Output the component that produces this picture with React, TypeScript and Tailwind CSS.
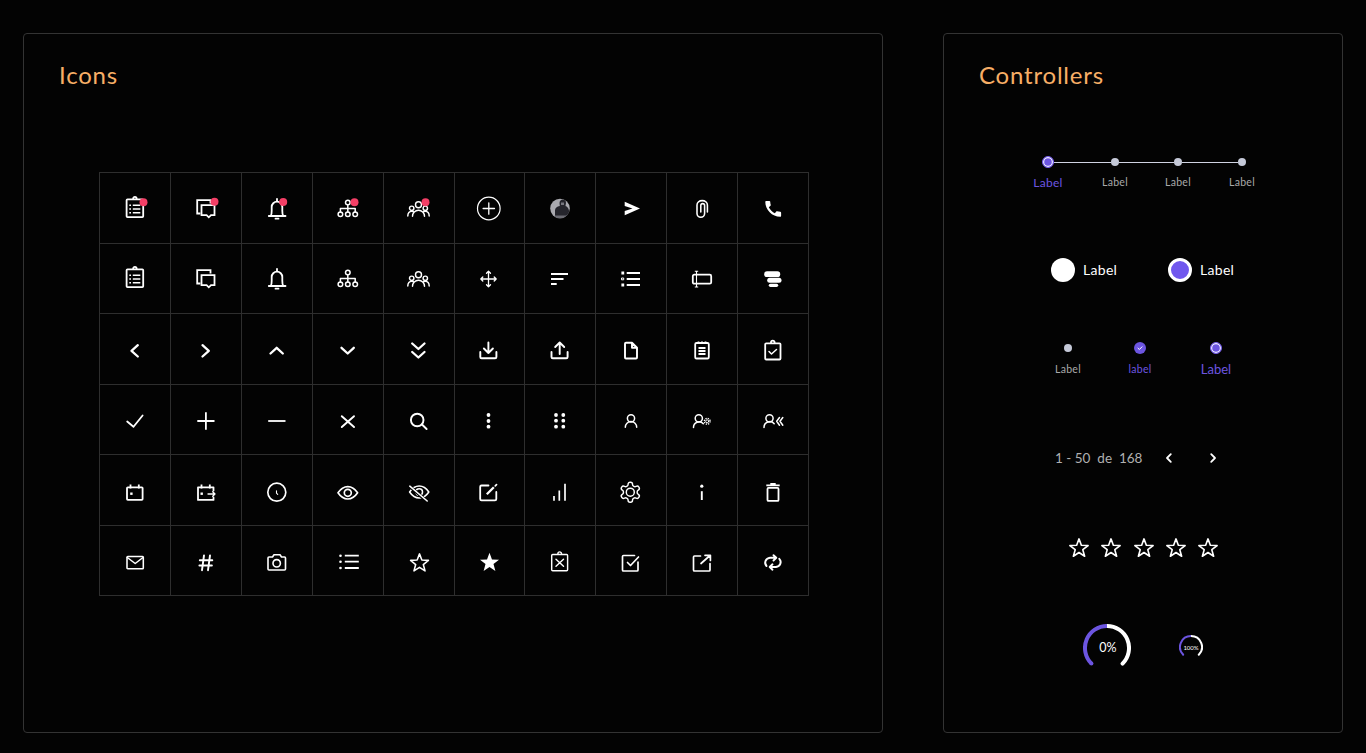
import React from "react";

const starPts = (cx: number, cy: number, R: number, r: number) => {
  const p: string[] = [];
  for (let i = 0; i < 10; i++) {
    const a = (Math.PI / 5) * i - Math.PI / 2;
    const q = i % 2 === 0 ? R : r;
    p.push(`${(cx + q * Math.cos(a)).toFixed(2)},${(cy + q * Math.sin(a)).toFixed(2)}`);
  }
  return p.join(" ");
};

const I = ({ children, w = 1.5 }: { children: React.ReactNode; w?: number }) => (
  <svg
    viewBox="0 0 24 24"
    fill="none"
    stroke="#fff"
    strokeWidth={w * 1.2}
    strokeLinecap="round"
    strokeLinejoin="round"
    className="w-6 h-6 overflow-visible"
  >
    {children}
  </svg>
);

const Dot = ({ x, y }: { x: number; y: number }) => <circle cx={x} cy={y} r={4} fill="#f43f66" stroke="none" />;

const Clipboard = () => (
  <>
    <rect x={3.6} y={3.4} width={16.6} height={17.8} rx={0.9} />
    <path d="M10.200 3.200v-.6a1.700 1.700 0 0 1 3.400 0v.6" />
    <path strokeWidth={1.4} strokeLinecap="butt" d="M9.800 9.200H17.300M9.800 13H17.300M9.800 16.800H17.300M6.300 9.200H8M6.300 13H8M6.300 16.800H8" />
  </>
);
const Messages = () => (
  <>
    <path strokeLinecap="square" strokeLinejoin="miter" d="M5.500 17.500H3.200V4.200H16.500V6.500" />
    <path strokeLinecap="square" strokeLinejoin="miter" d="M7.500 9.200H20.500V19.200H17L14.800 21.300L12.600 19.200H7.500Z" />
  </>
);
const Bell = () => (
  <>
    <path d="M5.800 19.800c.9-1.300 .9-3 .9-5V11a5.300 5.300 0 0 1 10.600 0v3.800c0 2 0 3.700 .9 5" />
    <path d="M3.800 20H20.500M10.500 22.700H13.500M12 2.800V5" />
  </>
);
const Org = () => (
  <g strokeWidth={1.5}>
    <circle cx={11.8} cy={6.500} r={2.300} />
    <circle cx={4.400} cy={18.200} r={2.300} />
    <circle cx={11.800} cy={18.200} r={2.300} />
    <circle cx={19.200} cy={18.200} r={2.300} />
    <path d="M11.800 8.800V15.900M4.400 15.900V12.500H19.200V15.900" />
  </g>
);
const Group = () => (
  <g strokeWidth={1.45}>
    <circle cx={11.500} cy={8.700} r={3} />
    <circle cx={4.700} cy={12.300} r={2.200} />
    <circle cx={18.300} cy={12.300} r={2.200} />
    <path d="M5.500 20.300a6 6 0 0 1 12 0M.8 20c0-3 1.500-4.800 3.900-4.800 .8 0 1.500 .2 2.100 .6M22.200 20c0-3-1.500-4.800-3.900-4.800-.8 0-1.500 .2-2.100 .6" />
  </g>
);
const Chk = ({ d }: { d: string }) => <path strokeWidth={2.3} d={d} />;
const Tray = ({ x }: { x: number }) => (
  <path d={`M${x} 15v5a1.300 1.300 0 0 0 1.300 1.300H${x + 14.800}a1.300 1.300 0 0 0 1.300-1.300v-5`} />
);

const cells: React.ReactNode[] = [
  <I><Clipboard /><Dot x={20.5} y={6.2} /></I>,
  <I><Messages /><Dot x={20.5} y={5.8} /></I>,
  <I><Bell /><Dot x={18.2} y={5.9} /></I>,
  <I><Org /><Dot x={18.5} y={6.2} /></I>,
  <I><Group /><Dot x={18.5} y={6.2} /></I>,
  <I w={1}>
    <circle cx={11.8} cy={12.5} r={11.3} />
    <path strokeWidth={1.3} d="M11.800 6.800V18.200M6.100 12.500H17.500" />
  </I>,
  <I>
    <defs>
      <clipPath id="av"><circle cx={12} cy={12.5} r={9.8} /></clipPath>
    </defs>
    <g clipPath="url(#av)" stroke="none">
      <rect x={0} y={0} width={24} height={24} fill="#a9a9af" />
      <path fill="#25252c" d="M7 23V14.500c0-2.500 2-4 4.800-4.500L11.500 7c0-2 1.500-3.500 3.500-3.500s3 1.500 3 3.500l-.5 3c1.500 .5 3 2 3.500 4.500V23Z" />
      <path fill="#77777f" d="M13 6.500h3V9h-3Z" />
      <path fill="#8a8a92" d="M3 19.500h18v5H3Z" opacity={0.7} />
    </g>
  </I>,
  <I><path stroke="none" fill="#fff" d="M5.700 5.800L21 12.500L5.700 19.200V15L13.500 12.500L5.700 10Z" /></I>,
  <I w={1.3}><path d="M17.400 16V9a5.200 4.400 0 0 0-10.400 0v8.500a3.800 3.800 0 0 0 7.600 0V9.500a1.900 1.900 0 0 0-3.800 0V16" /></I>,
  <I>
    <g transform="translate(12.2 12.8) scale(.88) translate(-12 -12)">
      <path stroke="none" fill="#fff" d="M20.010 15.380c-1.230 0-2.420-.2-3.530-.56-.35-.12-.74-.03-1.010.24l-1.570 1.970c-2.830-1.350-5.480-3.900-6.890-6.830l1.950-1.660c.27-.28.35-.67.24-1.020-.37-1.110-.56-2.300-.56-3.530 0-.54-.45-.99-.99-.99H4.190C3.650 3 3 3.240 3 3.990 3 13.280 10.730 21 20.010 21c.71 0 .99-.63.99-1.180v-3.450c0-.54-.45-.99-.99-.99z" />
    </g>
  </I>,

  <I><Clipboard /></I>,
  <I><Messages /></I>,
  <I><Bell /></I>,
  <I><Org /></I>,
  <I><Group /></I>,
  <I w={1.1}>
    <path d="M3.800 13H19.200M11.500 5.200V20.800M9.500 7.200L11.500 5.200L13.500 7.200M9.500 18.800L11.500 20.800L13.500 18.800M5.800 11L3.800 13L5.800 15M17.200 11L19.200 13L17.200 15" />
  </I>,
  <I w={1.5}><path strokeLinecap="butt" d="M3 8H20M3 13H15.500M3 18H8.700" /></I>,
  <I>
    <path strokeLinecap="butt" d="M7.700 7H21M7.700 13H21M7.700 19H21" />
    <path strokeWidth={3} strokeLinecap="butt" d="M2.400 7H5.200M2.400 19H5.200" />
    <rect x={2.900} y={12} width={1.800} height={1.800} strokeWidth={1} />
  </I>,
  <I>
    <rect x={2.800} y={8.700} width={18.400} height={9} rx={1.500} />
    <path strokeWidth={1.1} strokeLinecap="butt" d="M6.500 5.300V21M4.800 5.300H8.200M4.800 21H8.200" />
  </I>,
  <I>
    <g stroke="none" fill="#fff">
      <rect x={3.200} y={5.300} width={16} height={5.700} rx={2.850} />
      <rect x={6.200} y={11.700} width={14.300} height={5} rx={2.500} />
      <rect x={7.800} y={17.700} width={9.400} height={3.300} rx={1.650} />
    </g>
  </I>,

  <I><Chk d="M14.800 8.200L8.500 13.900L14.800 19.500" /></I>,
  <I><Chk d="M8.500 8.200L14.800 13.900L8.500 19.500" /></I>,
  <I><Chk d="M5.500 16.500L11.700 10.800L17.800 16.500" /></I>,
  <I><Chk d="M5.500 10.800L11.700 16.500L17.800 10.800" /></I>,
  <I><Chk d="M5.200 6.500L11.400 12L17.500 6.500M5.200 15L11.400 20.500L17.500 15" /></I>,
  <I w={1.6}><Tray x={3.300} /><path d="M11.400 5.500V16M6.900 11.500L11.400 16L15.900 11.500" /></I>,
  <I w={1.6}><Tray x={3.500} /><path d="M11.700 17V5.500M7.200 10L11.700 5.500L16.200 10" /></I>,
  <I w={1.6}><path d="M7 5.800H13L18 10.800V20.500a1 1 0 0 1-1 1H7a1 1 0 0 1-1-1V6.800a1 1 0 0 1 1-1ZM13 5.800V10.800H18" /></I>,
  <I>
    <rect x={5.200} y={6} width={13.600} height={15.500} rx={1.300} />
    <path strokeLinecap="butt" d="M8.500 4.400V7M12 4.400V7M15.500 4.400V7M8.500 11H15.500M8.500 14H15.500M8.500 17H15.500" />
  </I>,
  <I>
    <rect x={4.200} y={6.300} width={15.300} height={16.200} rx={1} />
    <path d="M10 6.100v-.6a1.800 1.800 0 0 1 3.600 0v.6" />
    <path strokeWidth={1.5} d="M8 14.500L10.500 17L15.500 12.500" />
  </I>,

  <I w={1.5}><path d="M4.200 14.500L10.500 19.800L19.600 8.500" /></I>,
  <I w={1.5}><path strokeLinecap="butt" d="M3.300 14H20.500M11.900 5.300V22.700" /></I>,
  <I w={1.5}><path strokeLinecap="butt" d="M3.200 14H20.500" /></I>,
  <I w={1.6}><path d="M5.800 9.200L18 20M18 9.200L5.800 20" /></I>,
  <I w={1.6}><circle cx={10.200} cy={13} r={6.300} /><path d="M15 17.500L19.600 22" /></I>,
  <I><g stroke="none" fill="#fff"><circle cx={11.500} cy={8} r={1.900} /><circle cx={11.500} cy={14} r={1.900} /><circle cx={11.500} cy={19.700} r={1.900} /></g></I>,
  <I>
    <g stroke="none" fill="#fff">
      <circle cx={8} cy={8} r={1.900} /><circle cx={15.300} cy={8} r={1.900} />
      <circle cx={8} cy={13.700} r={1.900} /><circle cx={15.300} cy={13.700} r={1.900} />
      <circle cx={8} cy={19.700} r={1.900} /><circle cx={15.300} cy={19.700} r={1.900} />
    </g>
  </I>,
  <I w={1.25}><circle cx={12} cy={11.300} r={3.600} /><path d="M6.300 20.300a5.700 5.700 0 0 1 11.400 0" /></I>,
  <I w={1.25}>
    <circle cx={8.800} cy={11.300} r={3.600} />
    <path d="M3.500 20.500a5.600 5.600 0 0 1 9.800-3.800" />
    <circle cx={17.200} cy={14.300} r={1.500} strokeWidth={1} />
    <circle cx={17.200} cy={14.300} r={2.900} strokeWidth={1.300} strokeDasharray="1.300 1.000" strokeLinecap="butt" />
  </I>,
  <I w={1.25}>
    <circle cx={8.500} cy={11.300} r={3.600} />
    <path d="M3 20.500a5.800 5.800 0 0 1 10.200-3.800M18.500 10.500L15.700 14.300L18.500 18.200M21.800 10.500L19 14.300L21.800 18.200" />
  </I>,

  <I>
    <rect x={4} y={9.300} width={15.600} height={12.600} rx={.8} />
    <path strokeLinecap="butt" d="M7.500 6.500V10.500M15.800 6.500V10.500" />
    <rect x={7.200} y={14.500} width={2.400} height={2.400} fill="#fff" stroke="none" />
  </I>,
  <I>
    <path d="M19.500 12.500V9.300H4V21.900H19.500V19.500" />
    <path strokeLinecap="butt" d="M7.500 6.500V10.500M15.800 6.500V10.500" />
    <rect x={6.500} y={14.500} width={2.400} height={2.400} fill="#fff" stroke="none" />
    <path strokeWidth={1.300} d="M14 16H21M18.700 13.700L21 16L18.700 18.300" />
  </I>,
  <I w={1.4}>
    <circle cx={11.800} cy={14.200} r={9} />
    <path strokeWidth={1.100} d="M11.500 12.800V15.200L12.700 16.300" />
  </I>,
  <I w={1.4}>
    <path d="M2 14.800C5 10.300 8 8.600 11.800 8.600S18.600 10.300 21.600 14.800C18.600 19.300 15.600 21 11.800 21S5 19.300 2 14.800Z" />
    <circle cx={11.800} cy={14.800} r={3.500} />
  </I>,
  <I w={1.3}>
    <path d="M2.600 14C5.500 9.700 8.500 8 12.200 8S19 9.700 21.800 14C19 18.300 16 20 12.200 20S5.500 18.300 2.600 14Z" />
    <circle cx={12.200} cy={14} r={3.300} />
    <path stroke="#030303" strokeWidth={3} d="M4 9.500L19.500 23" />
    <path d="M2.800 8.200L20.200 23" />
  </I>,
  <I w={1.5}>
    <path d="M11.500 7.500H4.500a1.300 1.300 0 0 0-1.300 1.300V21a1.300 1.300 0 0 0 1.300 1.300H18a1.300 1.300 0 0 0 1.300-1.300V14" />
    <path strokeWidth={2.300} strokeLinecap="butt" d="M9.800 16.300L16.800 9.200" />
    <path d="M18.300 7.800L19.500 6.700" />
  </I>,
  <I w={1.4}><path strokeLinecap="butt" d="M6 18V22.800M11.300 12.500V22.800M17 5.800V22.800" /></I>,
  <I w={1.2}>
    <g transform="translate(-.7 2.200)">
      <path d="M12.220 2h-.44a2 2 0 0 0-2 2v.18a2 2 0 0 1-1 1.730l-.43.25a2 2 0 0 1-2 0l-.15-.08a2 2 0 0 0-2.730.73l-.22.38a2 2 0 0 0 .73 2.730l.15.1a2 2 0 0 1 1 1.720v.51a2 2 0 0 1-1 1.740l-.15.09a2 2 0 0 0-.73 2.730l.22.38a2 2 0 0 0 2.730.73l.15-.08a2 2 0 0 1 2 0l.43.25a2 2 0 0 1 1 1.730V20a2 2 0 0 0 2 2h.44a2 2 0 0 0 2-2v-.18a2 2 0 0 1 1-1.730l.43-.25a2 2 0 0 1 2 0l.15.08a2 2 0 0 0 2.730-.73l.22-.39a2 2 0 0 0-.73-2.730l-.15-.08a2 2 0 0 1-1-1.740v-.5a2 2 0 0 1 1-1.740l.15-.09a2 2 0 0 0 .73-2.730l-.22-.38a2 2 0 0 0-2.730-.73l-.15.08a2 2 0 0 1-2 0l-.43-.25a2 2 0 0 1-1-1.730V4a2 2 0 0 0-2-2z" />
      <circle cx={12} cy={12} r={4} />
    </g>
  </I>,
  <I w={1.6}>
    <circle cx={11.800} cy={8.200} r={1.600} fill="#fff" stroke="none" />
    <path strokeLinecap="butt" d="M11.800 13.200V22" />
  </I>,
  <I w={1.5}>
    <path strokeLinecap="butt" d="M5.300 7.300H18.700M9.300 6H14.700" />
    <rect x={6.500} y={9.900} width={11} height={13} rx={1} />
  </I>,

  <I w={1.3}>
    <rect x={4} y={8.500} width={16.300} height={12.300} rx={.8} />
    <path d="M4.300 9.500L12.200 15.500L20 9.500" />
  </I>,
  <I w={1.6}><path d="M10 7.500L8 22.200M16 7.500L14 22.200M5.800 12.200H18.300M5.400 17.500H17.900" /></I>,
  <I w={1.35}>
    <path d="M3 10a1 1 0 0 1 1-1H7.500L9 6.800H15L16.500 9H19.500a1 1 0 0 1 1 1V21a1 1 0 0 1-1 1H4a1 1 0 0 1-1-1Z" />
    <circle cx={11.700} cy={15.300} r={3.700} />
  </I>,
  <I>
    <path strokeLinecap="butt" d="M8.800 7.700H22.800M8.800 13.700H22.800M8.800 20H22.800" />
    <g stroke="none" fill="#fff"><circle cx={4.500} cy={7.700} r={1.300} /><circle cx={4.500} cy={13.700} r={1.300} /><circle cx={4.500} cy={20} r={1.300} /></g>
  </I>,
  <I w={1.3}><polygon points={starPts(12.5, 15.3, 9.4, 4)} /></I>,
  <I><polygon points={starPts(12.5, 14.8, 10, 4.2)} fill="#fff" stroke="none" /></I>,
  <I w={1.2}>
    <rect x={3.700} y={6.500} width={15.900} height={16.200} rx={1} />
    <path d="M9.900 6.300v-.6a1.800 1.800 0 0 1 3.600 0v.6" />
    <path d="M8 11.200L15.500 18.200M15.500 11.200L8 18.200" />
  </I>,
  <I w={1.4}>
    <path d="M15.500 7.500H4.500a1 1 0 0 0-1 1V22a1 1 0 0 0 1 1H18a1 1 0 0 0 1-1V14" />
    <path d="M8.500 14.500L11.500 17.500L19.500 9" />
  </I>,
  <I w={1.4}>
    <path d="M10.500 8H4.500a1 1 0 0 0-1 1V22a1 1 0 0 0 1 1H19a1 1 0 0 0 1-1V15.500" />
    <path d="M11 15.500L20 7.500M15 7.300H20.400V12.500" />
  </I>,
  <I w={1.6}>
    <path d="M5.500 18A5.500 5 0 0 1 9 9.800H15M12.500 7.200L15.300 9.800L12.500 12.500" />
    <path d="M18.300 10.800A5.500 5 0 0 1 15 19H9M11.500 16.300L8.700 19L11.500 21.700" />
  </I>,
];

const Step = () => <div className="w-2 h-2 rounded-full bg-[#c5c9d8]" />;
const Line = ({ w }: { w: string }) => <div className={`${w} h-px bg-[#d0d3e2]`} />;

const Ringed = () => (
  <div className="w-3 h-3 rounded-full bg-[#6c55e0] border-[1.5px] border-[#7a62ee] shadow-[inset_0_0_0_1.2px_#f4f3ff]" />
);

const Chev = ({ d }: { d: string }) => (
  <svg viewBox="0 0 16 16" fill="none" stroke="#fff" strokeWidth={1.8} strokeLinecap="round" strokeLinejoin="round" className="w-4 h-4">
    <path d={d} />
  </svg>
);

const Star = () => (
  <svg viewBox="0 0 22 22" fill="none" stroke="#fff" strokeWidth={1.6} strokeLinejoin="round" className="w-[22px] h-[22px]">
    <polygon points={starPts(11, 11.5, 9.6, 4)} />
  </svg>
);

export default function App() {
  return (
    <div className="h-screen w-full overflow-hidden bg-[#030303] font-['Lato',sans-serif] flex items-start gap-[60px] pt-[33px] pl-[23px]">
      <section className="w-[860px] h-[700px] shrink-0 rounded-[4px] border border-[#333] pl-[35px] pt-[25px]">
        <h2 className="text-2xl h-8 leading-8 text-[#f7ae66] tracking-[0.8px]">Icons</h2>
        <div className="ml-[40px] mt-[81px] w-[710px] h-[424px] grid grid-cols-10 grid-rows-6 border-l border-t border-[#2e2e2e]">
          {cells.map((c, i) => (
            <div key={i} className="flex items-center justify-center border-r border-b border-[#2e2e2e]">
              {c}
            </div>
          ))}
        </div>
      </section>

      <section className="w-[400px] h-[700px] shrink-0 rounded-[4px] border border-[#333] pt-[25px]">
        <h2 className="pl-[35px] text-2xl h-8 leading-8 text-[#f7ae66] tracking-[0.8px]">Controllers</h2>

        <div className="ml-[98px] mt-[65px] flex items-center w-[204px] h-3">
          <Ringed />
          <Line w="w-[57px]" />
          <Step />
          <Line w="w-[55px]" />
          <Step />
          <Line w="w-[56px]" />
          <Step />
        </div>
        <div className="ml-[84px] mt-2 flex items-center h-[14px]">
          <span className="w-10 text-center text-xs font-normal tracking-[0.3px] text-[#6c55e0]">Label</span>
          <span className="ml-[27px] w-10 text-center text-[10.500px] tracking-[0.3px] text-[#a9a9a9]">Label</span>
          <span className="ml-[23px] w-10 text-center text-[10.500px] tracking-[0.3px] text-[#a9a9a9]">Label</span>
          <span className="ml-6 w-10 text-center text-[10.500px] tracking-[0.3px] text-[#a9a9a9]">Label</span>
        </div>

        <div className="ml-[107px] mt-[68px] flex items-center h-6">
          <div className="w-6 h-6 rounded-full bg-white" />
          <span className="ml-2 w-9 text-sm font-normal text-white tracking-[0.3px]">Label</span>
          <div className="ml-[49px] w-6 h-6 rounded-full bg-[#7158ee] border-[3px] border-white" />
          <span className="ml-2 w-9 text-sm font-normal text-white tracking-[0.3px]">Label</span>
        </div>

        <div className="ml-[94px] mt-[60px] flex items-start">
          <div className="w-[60px] flex flex-col items-center">
            <div className="h-3 flex items-center"><div className="w-2 h-2 rounded-full bg-[#c5c9d8]" /></div>
            <span className="mt-[7px] h-4 leading-4 text-[10.500px] tracking-[0.3px] text-[#a9a9a9]">Label</span>
          </div>
          <div className="ml-3 w-[60px] flex flex-col items-center">
            <div className="w-3 h-3 rounded-full bg-[#6c55e0] flex items-center justify-center">
              <svg viewBox="0 0 12 12" fill="none" stroke="#fff" strokeWidth={1} strokeLinecap="round" strokeLinejoin="round" className="w-3 h-3">
                <path d="M4 6.200L5.400 7.500L8 4.800" />
              </svg>
            </div>
            <span className="mt-[7px] h-4 leading-4 text-[10.500px] tracking-[0.3px] text-[#6c55e0]">label</span>
          </div>
          <div className="ml-4 w-[60px] flex flex-col items-center">
            <Ringed />
            <span className="mt-[7px] h-4 leading-4 text-[13px] text-[#6c55e0]">Label</span>
          </div>
        </div>

        <div className="ml-[111px] mt-[71px] flex items-center h-5">
          <span className="w-[88px] text-[13.500px] whitespace-pre text-[#b0b0b0]">1 - 50  de  168</span>
          <span className="ml-[18px]"><Chev d="M9.800 4.200L6 8L9.800 11.800" /></span>
          <span className="ml-7"><Chev d="M6.200 4.200L10 8L6.200 11.800" /></span>
        </div>

        <div className="ml-[124px] mt-[69px] flex items-center gap-[10.250px]">
          <Star /><Star /><Star /><Star /><Star />
        </div>

        <div className="ml-[139px] mt-[65px] flex items-start">
          <div className="relative w-12 h-12">
            <svg viewBox="0 0 48 48" fill="none" strokeWidth={4} strokeLinecap="round" className="w-12 h-12">
              <path stroke="#fff" d="M24 2A22 22 0 0 1 39.560 39.560" />
              <path stroke="#6c55e0" d="M8.440 39.560A22 22 0 0 1 24 2" strokeLinecap="butt" />
              <circle cx={8.440} cy={39.560} r={2} fill="#6c55e0" />
            </svg>
            <span className="absolute inset-0 pl-[2px] flex items-center justify-center text-[12.500px] text-white">0%</span>
          </div>
          <div className="relative ml-12 mt-[11px] w-6 h-6">
            <svg viewBox="0 0 24 24" fill="none" strokeWidth={2} strokeLinecap="round" className="w-6 h-6">
              <path stroke="#fff" d="M12 1A11 11 0 0 1 19.780 19.780" />
              <path stroke="#6c55e0" d="M4.220 19.780A11 11 0 0 1 12 1" strokeLinecap="butt" />
              <circle cx={4.220} cy={19.780} r={1} fill="#6c55e0" />
            </svg>
            <span className="absolute inset-0 flex items-center justify-center text-[6px] text-white">100%</span>
          </div>
        </div>
      </section>
    </div>
  );
}
